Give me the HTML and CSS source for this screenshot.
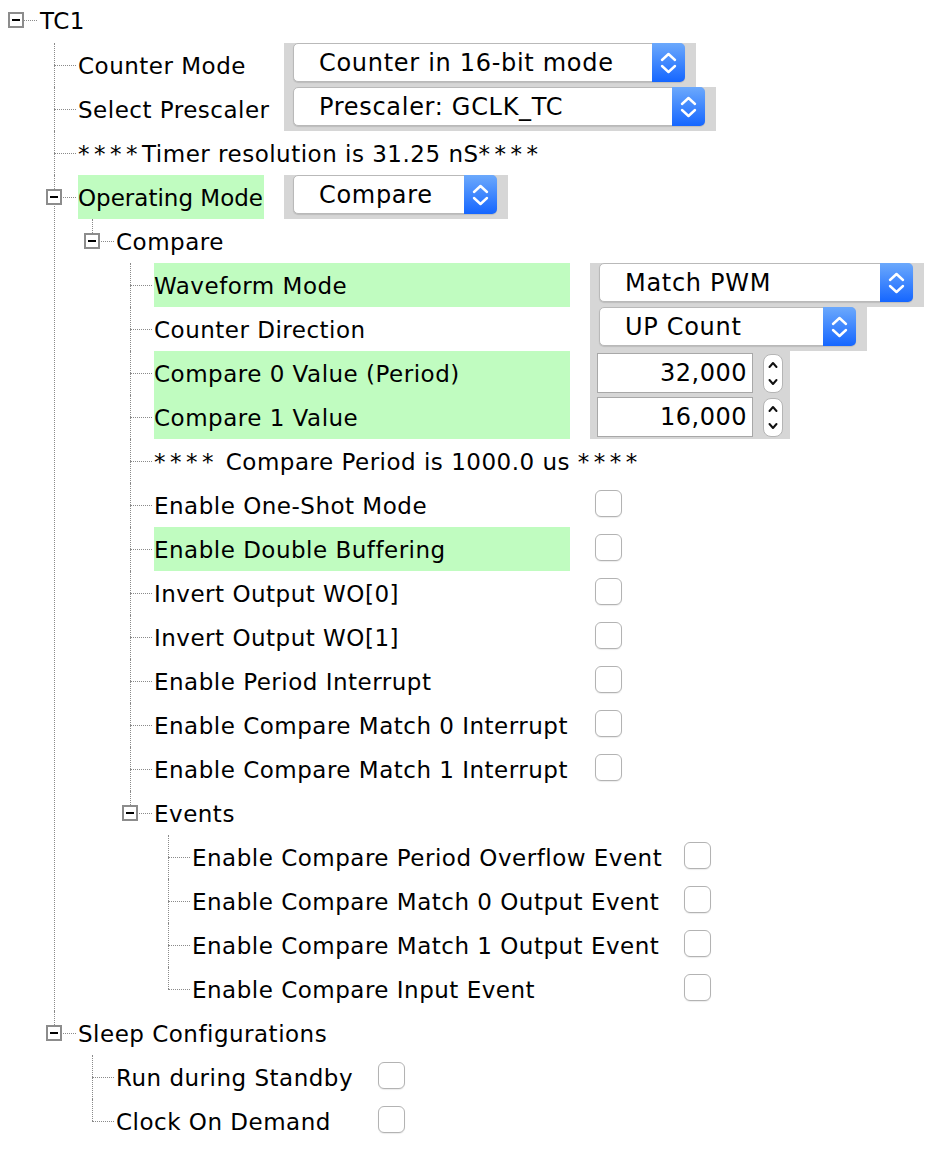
FILE: index.html
```html
<!DOCTYPE html>
<html lang="en">
<head>
<meta charset="utf-8">
<title>TC1</title>
<link rel="stylesheet" href="styles.css">
</head>
<body>
<ul class="tree">
  <li class="root">
    <div class="row root-row"><span class="tog"></span><span class="lbl">TC1</span></div>
    <ul class="kids g1">
      <li>
        <div class="row"><span class="lbl">Counter Mode</span>
          <div class="panel"><div class="combo w-mode"><span class="val">Counter in 16-bit mode</span><span class="arrows"><svg width="33" height="39" viewBox="0 0 33 39"><path d="M10 17 L16.5 11 L23 17 M10 23 L16.5 29 L23 23" fill="none" stroke="#fff" stroke-width="2.4" stroke-linecap="round" stroke-linejoin="round"/></svg></span></div></div>
        </div>
      </li>
      <li>
        <div class="row"><span class="lbl">Select Prescaler</span>
          <div class="panel"><div class="combo w-pre"><span class="val">Prescaler: GCLK_TC</span><span class="arrows"><svg width="33" height="39" viewBox="0 0 33 39"><path d="M10 17 L16.5 11 L23 17 M10 23 L16.5 29 L23 23" fill="none" stroke="#fff" stroke-width="2.4" stroke-linecap="round" stroke-linejoin="round"/></svg></span></div></div>
        </div>
      </li>
      <li>
        <div class="row"><span class="note"><span class="ast">****</span>Timer resolution is 31.25 nS<span class="ast">****</span></span></div>
      </li>
      <li>
        <div class="row"><span class="tog"></span><span class="lbl hl tight">Operating Mode</span>
          <div class="panel"><div class="combo w-op"><span class="val">Compare</span><span class="arrows"><svg width="33" height="39" viewBox="0 0 33 39"><path d="M10 17 L16.5 11 L23 17 M10 23 L16.5 29 L23 23" fill="none" stroke="#fff" stroke-width="2.4" stroke-linecap="round" stroke-linejoin="round"/></svg></span></div></div>
        </div>
        <ul class="kids g2">
          <li>
            <div class="row"><span class="tog"></span><span class="lbl">Compare</span></div>
            <ul class="kids g3">
              <li>
                <div class="row"><span class="lbl hl">Waveform Mode</span>
                  <div class="panel"><div class="combo w-wave"><span class="val">Match PWM</span><span class="arrows"><svg width="33" height="39" viewBox="0 0 33 39"><path d="M10 17 L16.5 11 L23 17 M10 23 L16.5 29 L23 23" fill="none" stroke="#fff" stroke-width="2.4" stroke-linecap="round" stroke-linejoin="round"/></svg></span></div></div>
                </div>
              </li>
              <li>
                <div class="row"><span class="lbl">Counter Direction</span>
                  <div class="panel"><div class="combo w-dir"><span class="val">UP Count</span><span class="arrows"><svg width="33" height="39" viewBox="0 0 33 39"><path d="M10 17 L16.5 11 L23 17 M10 23 L16.5 29 L23 23" fill="none" stroke="#fff" stroke-width="2.4" stroke-linecap="round" stroke-linejoin="round"/></svg></span></div></div>
                </div>
              </li>
              <li>
                <div class="row"><span class="lbl hl">Compare 0 Value (Period)</span>
                  <div class="panel spin-panel"><div class="field">32,000</div><div class="spin"><svg width="20" height="39" viewBox="0 0 20 39"><path d="M6.5 13 L10 9 L13.5 13 M6.5 26 L10 30 L13.5 26" fill="none" stroke="#111" stroke-width="2" stroke-linecap="round" stroke-linejoin="round"/></svg></div></div>
                </div>
              </li>
              <li>
                <div class="row"><span class="lbl hl">Compare 1 Value</span>
                  <div class="panel spin-panel"><div class="field">16,000</div><div class="spin"><svg width="20" height="39" viewBox="0 0 20 39"><path d="M6.5 13 L10 9 L13.5 13 M6.5 26 L10 30 L13.5 26" fill="none" stroke="#111" stroke-width="2" stroke-linecap="round" stroke-linejoin="round"/></svg></div></div>
                </div>
              </li>
              <li><div class="row"><span class="note"><span class="ast">****</span> Compare Period is 1000.0 us <span class="ast">****</span></span></div></li>
              <li><div class="row"><span class="lbl">Enable One-Shot Mode</span><span class="check"></span></div></li>
              <li><div class="row"><span class="lbl hl">Enable Double Buffering</span><span class="check"></span></div></li>
              <li><div class="row"><span class="lbl">Invert Output WO[0]</span><span class="check"></span></div></li>
              <li><div class="row"><span class="lbl">Invert Output WO[1]</span><span class="check"></span></div></li>
              <li><div class="row"><span class="lbl">Enable Period Interrupt</span><span class="check"></span></div></li>
              <li><div class="row"><span class="lbl">Enable Compare Match 0 Interrupt</span><span class="check"></span></div></li>
              <li><div class="row"><span class="lbl">Enable Compare Match 1 Interrupt</span><span class="check"></span></div></li>
              <li>
                <div class="row"><span class="tog"></span><span class="lbl">Events</span></div>
                <ul class="kids g4">
                  <li><div class="row"><span class="lbl">Enable Compare Period Overflow Event</span><span class="check"></span></div></li>
                  <li><div class="row"><span class="lbl">Enable Compare Match 0 Output Event</span><span class="check"></span></div></li>
                  <li><div class="row"><span class="lbl">Enable Compare Match 1 Output Event</span><span class="check"></span></div></li>
                  <li><div class="row"><span class="lbl">Enable Compare Input Event</span><span class="check"></span></div></li>
                </ul>
              </li>
            </ul>
          </li>
        </ul>
      </li>
      <li>
        <div class="row"><span class="tog"></span><span class="lbl">Sleep Configurations</span></div>
        <ul class="kids gs">
          <li><div class="row"><span class="lbl">Run during Standby</span><span class="check"></span></div></li>
          <li><div class="row"><span class="lbl">Clock On Demand</span><span class="check"></span></div></li>
        </ul>
      </li>
    </ul>
  </li>
</ul>
</body>
</html>
```

FILE: styles.css
```css
html, body {
  margin: 0;
  padding: 0;
  background: #fff;
}

body {
  font-family: "DejaVu Sans", Verdana, sans-serif;
  font-size: 23px;
  letter-spacing: 0.5px;
  color: #000;
}

.tree,
.kids {
  list-style: none;
  margin: 0;
}

.tree {
  padding: 0 0 0 40px;
}

.kids {
  padding: 0 0 0 38px;
}

.tree li {
  position: relative;
}

/* vertical connector of every child */
.kids > li::before {
  content: "";
  position: absolute;
  left: -24px;
  top: 0;
  bottom: 0;
  border-left: 1px dotted #8a8a8a;
}

.kids > li:last-child::before {
  bottom: auto;
  height: 22px;
}

.row {
  position: relative;
  display: flex;
  align-items: flex-start;
  height: 44px;
}

/* horizontal connector */
.kids > li > .row::before {
  content: "";
  position: absolute;
  left: -24px;
  top: 22px;
  width: 22px;
  border-top: 1px dotted #8a8a8a;
}

.root-row {
  height: 43px;
}

.root-row::before {
  content: "";
  position: absolute;
  left: -16px;
  top: 20px;
  width: 13px;
  border-top: 1px dotted #8a8a8a;
}

/* expand / collapse box */
.tog {
  position: absolute;
  left: -32px;
  top: 14px;
  width: 16px;
  height: 16px;
  box-sizing: border-box;
  border: 2px solid #8c8c8c;
  background: #fff;
  z-index: 1;
}

.root-row .tog {
  top: 12px;
}

.tog::after {
  content: "";
  position: absolute;
  left: 2px;
  top: 5px;
  width: 8px;
  height: 2px;
  background: #000;
}

.lbl,
.note {
  display: block;
  height: 44px;
  line-height: 46px;
  white-space: nowrap;
  flex: none;
}

.root-row .lbl {
  height: 43px;
  line-height: 42px;
}

.tight {
  letter-spacing: 0;
}

.ast {
  letter-spacing: 4.5px;
}

.hl {
  background: #c0fcc0;
}

/* label column widths per group */
.g1 > li > .row > .lbl { width: 186px; }
.g3 > li > .row > .lbl { width: 416px; }
.g4 > li > .row > .lbl { width: 467px; }
.gs > li > .row > .lbl { width: 237px; }

/* grey widget panel */
.panel {
  flex: none;
  display: flex;
  align-items: flex-start;
  height: 44px;
  margin-left: 20px;
  padding: 0 11px 0 9px;
  background: #d6d6d6;
}

.combo {
  display: flex;
  height: 39px;
  box-sizing: border-box;
  background: #fff;
  border: 1px solid #b9b9b9;
  border-radius: 5px;
  box-shadow: 0 1px 1px rgba(0, 0, 0, 0.12);
}

.combo .val {
  flex: 1;
  padding-left: 25px;
  font-size: 24px;
  letter-spacing: 0.7px;
  line-height: 38px;
  white-space: nowrap;
}

.combo .arrows {
  flex: none;
  width: 33px;
  height: 39px;
  margin: -1px -1px -1px 0;
  border-radius: 0 5px 5px 0;
  background: linear-gradient(#6ca9fc, #1566ff);
}

.combo .arrows svg {
  display: block;
}

.w-mode { width: 392px; }
.w-pre  { width: 412px; }
.w-op   { width: 204px; }
.w-wave { width: 314px; }
.w-dir  { width: 257px; }

/* spinner */
.spin-panel {
  padding: 2px 7px 0 7px;
  height: 42px;
  gap: 10px;
}

.field {
  width: 156px;
  height: 40px;
  box-sizing: border-box;
  border: 1px solid #a8a8a8;
  background: #fff;
  text-align: right;
  padding-right: 5px;
  font-size: 24px;
  letter-spacing: 0.5px;
  line-height: 38px;
}

.spin {
  width: 20px;
  height: 39px;
  margin-top: 1px;
  box-sizing: border-box;
  border: 1px solid #b5b5b5;
  border-radius: 8px;
  background: #fff;
  overflow: hidden;
}

.spin svg {
  display: block;
  margin: -1px 0 0 -1px;
}

/* checkbox */
.check {
  flex: none;
  width: 27px;
  height: 27px;
  box-sizing: border-box;
  margin: 7px 0 0 25px;
  border: 1px solid #b3b3b3;
  border-radius: 6px;
  background: #fff;
  box-shadow: 0 1px 1px rgba(0, 0, 0, 0.08);
}
```
